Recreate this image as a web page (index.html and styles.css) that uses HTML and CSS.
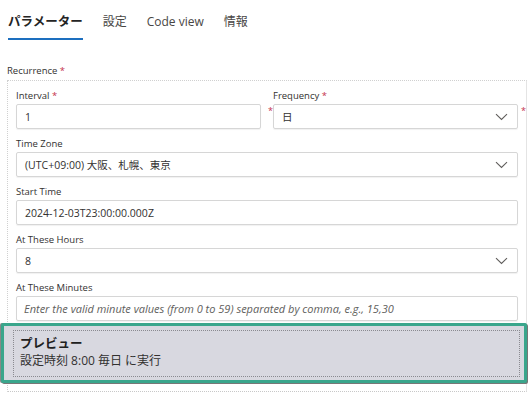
FILE: index.html
```html
<!DOCTYPE html>
<html lang="ja">
<head>
    <meta charset="UTF-8">
    <title>Recurrence</title>
    <link rel="stylesheet" href="styles.css">
</head>
<body>

    <!-- Tabs -->
    <nav class="tabs">
        <a class="tab active">パラメーター</a>
        <a class="tab">設定</a>
        <a class="tab">Code view</a>
        <a class="tab">情報</a>
    </nav>

    <div class="group-label">Recurrence <span class="req">*</span></div>

    <div class="group">
        <div class="row">
            <div class="field half">
                <label>Interval <span class="req">*</span></label>
                <div class="input">1</div>
            </div>
            <div class="field half">
                <label>Frequency <span class="req">*</span></label>
                <div class="marked">
                    <span class="req side-left">*</span>
                    <div class="input select">日<svg class="chev" width="13" height="8" viewBox="0 0 13 8"><path d="M1 1.2 L6.5 6.5 L12 1.2" fill="none" stroke="#605e5c" stroke-width="1.1"/></svg></div>
                    <span class="req side-right">*</span>
                </div>
            </div>
        </div>

        <div class="field">
            <label>Time Zone</label>
            <div class="input select">(UTC+09:00) 大阪、札幌、東京<svg class="chev" width="13" height="8" viewBox="0 0 13 8"><path d="M1 1.2 L6.5 6.5 L12 1.2" fill="none" stroke="#605e5c" stroke-width="1.1"/></svg></div>
        </div>

        <div class="field">
            <label>Start Time</label>
            <div class="input">2024-12-03T23:00:00.000Z</div>
        </div>

        <div class="field">
            <label>At These Hours</label>
            <div class="input select">8<svg class="chev" width="13" height="8" viewBox="0 0 13 8"><path d="M1 1.2 L6.5 6.5 L12 1.2" fill="none" stroke="#605e5c" stroke-width="1.1"/></svg></div>
        </div>

        <div class="field last">
            <label>At These Minutes</label>
            <div class="input placeholder">Enter the valid minute values (from 0 to 59) separated by comma, e.g., 15,30</div>
        </div>

        <!-- Preview -->
        <div class="preview">
            <div class="preview-inner">
                <div class="preview-title">プレビュー</div>
                <div class="preview-text">設定時刻 8:00 毎日 に実行</div>
            </div>
        </div>
    </div>

</body>
</html>
```

FILE: styles.css
```css
/* General */
body {
    margin: 0;
    background-color: #ffffff;
    color: #323130;
    font-family: "Open Sans", "Noto Sans CJK JP", sans-serif;
    overflow: hidden;
}

/* Tabs */
.tabs {
    display: flex;
    gap: 20px;
    padding: 13px 0 0 8px;
}

.tab {
    font-size: 12px;
    line-height: 18px;
    padding-bottom: 7px;
    color: #484644;
    border-bottom: 2px solid transparent;
}

.tab.active {
    font-weight: 700;
    font-size: 12.5px;
    color: #242424;
    border-bottom-color: #1d6fbf;
}

/* Recurrence group */
.group-label {
    font-size: 9.5px;
    line-height: 14px;
    margin: 24px 0 2px 7px;
}

.req {
    color: #c4314b;
}

.group {
    margin: 0 3px 0 7px;
    padding: 8px 8px 8px 8px;
    border-top: 1px dotted #d0d0d0;
    border-left: 1px dotted #d0d0d0;
    border-right: 1px solid #e4e4e4;
    border-bottom: 1px dotted #c8c8c8;
}

.row {
    display: flex;
    gap: 12px;
}

.half {
    flex: 1;
}

.field {
    margin-bottom: 8px;
}

.field.last {
    margin-bottom: 2px;
}

.field label {
    display: block;
    font-size: 9.5px;
    line-height: 14px;
    height: 14px;
    margin-bottom: 1px;
}

.input {
    display: flex;
    align-items: center;
    height: 23px;
    padding: 0 8px;
    border: 1px solid #d6d6d6;
    border-radius: 2px;
    box-shadow: 0 1px 1px rgba(0, 0, 0, 0.06);
    font-size: 10.5px;
    color: #323130;
}

.select {
    justify-content: space-between;
}

.chev {
    margin-right: 1px;
}

.placeholder {
    font-style: italic;
    color: #605e5c;
    font-size: 11px;
    padding-left: 7px;
    white-space: nowrap;
}

/* Red markers around frequency */
.marked {
    position: relative;
}

.side-left,
.side-right {
    position: absolute;
    top: 0;
    font-size: 9px;
}

.side-left {
    left: -5px;
}

.side-right {
    right: -8px;
}

/* Preview box */
.preview {
    margin: 0 -9px 0 -15px;
    padding: 4px 4px 3px 9px;
    background-color: #d8d8e0;
    border: 3px solid #3aa68c;
    border-radius: 2px;
    box-shadow: 1px 1px 0 #777, -1px 0 0 #888;
}

.preview-inner {
    border: 1px dotted #8a8a90;
    padding: 5px 6px 7px;
}

.preview-title {
    font-size: 12.5px;
    font-weight: 700;
    line-height: 16px;
    color: #202020;
}

.preview-text {
    font-size: 12px;
    line-height: 17px;
    color: #323130;
}
```
